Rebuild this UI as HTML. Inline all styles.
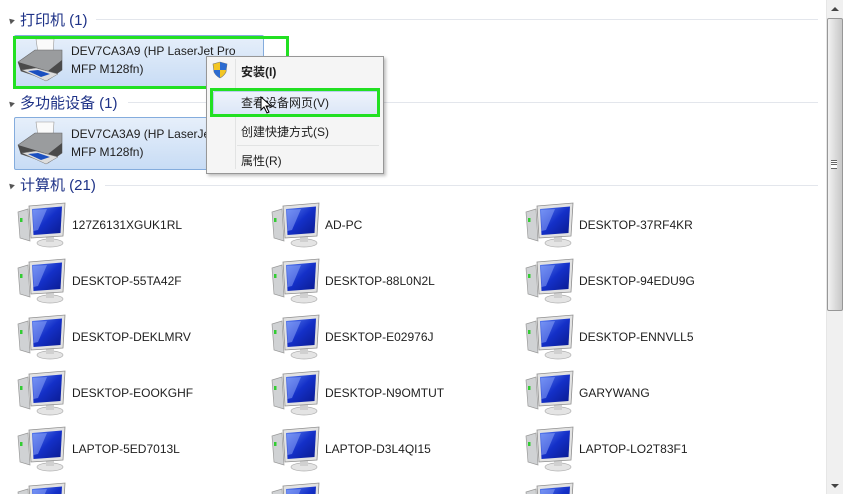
<!DOCTYPE html>
<html><head><meta charset="utf-8"><style>
html,body{margin:0;width:843px;height:494px;overflow:hidden}
body{background:#fff;position:relative;font-family:"Liberation Sans","Noto Sans CJK SC",sans-serif;font-size:12px;color:#1e1e1e}
.a{position:absolute}
.hd{position:absolute;left:8px;font-size:15px;color:#1e3287;white-space:nowrap}
.hd i{display:inline-block;width:0;height:0;border-left:3px solid transparent;border-right:3px solid transparent;border-bottom:5px solid #555;transform:rotate(-45deg);margin-right:6px;vertical-align:2px}
.ln{position:absolute;height:1px;background:#e3e6ec;right:25px}
.tile{position:absolute;background:linear-gradient(#e6effa,#c8dcf5);border:1px solid #84acdd;border-radius:2px}
.t{position:absolute;white-space:nowrap;font-size:12px}
.g{position:absolute;border:3px solid #22e022}
.mi{position:absolute;left:241px;white-space:nowrap}
</style></head><body>
<svg width="0" height="0" style="position:absolute"><defs>
<linearGradient id="sc" x1="0" y1="0" x2="1" y2="1"><stop offset="0" stop-color="#5a7ff0"/><stop offset=".5" stop-color="#1430c8"/><stop offset="1" stop-color="#0a1a90"/></linearGradient>
<g id="pc"><path d="M4 12 L14 9 L16 41 L6 38Z" fill="#d0d2d4" stroke="#9a9a9a" stroke-width=".7"/><rect x="6" y="18" width="2.5" height="4" fill="#3c3"/>
<ellipse cx="36" cy="43" rx="13" ry="4" fill="#e4e4e4" stroke="#b0b0b0" stroke-width=".7"/><rect x="32" y="36" width="8" height="6" fill="#d0d0d0"/>
<path d="M15 6 L51 3 L49 36 L17 38Z" fill="#e2e2e2" stroke="#8f8f8f" stroke-width=".8"/><path d="M18 9 L48 6.5 L46.5 33 L19.5 35Z" fill="url(#sc)"/><path d="M19 10 L33 9 L24 30 L19.5 31Z" fill="#9fb5ff" opacity=".45"/></g>
<g id="pr"><path d="M20 1 L38 1 L37 15 L22 15Z" fill="#fafafa" stroke="#999" stroke-width=".6"/><path d="M2 24 L19 12 L46 12 L46 32 L32 42 L5 33Z" fill="#9a9c9e" stroke="#666" stroke-width=".6"/><path d="M2 24 L32 33 L46 22 L46 32 L32 42 L5 33Z" fill="#4a4a4a"/><path d="M6 32 L20 30 L42 36 L30 43Z" fill="#ddd" stroke="#777" stroke-width=".5"/><path d="M12 33 L22 32 L34 36 L25 39Z" fill="#1a4fc0"/></g>
</defs></svg>

<div class="hd" style="top:9px"><i></i>打印机 (1)</div><div class="ln" style="left:96px;top:19px"></div>
<div class="hd" style="top:92px"><i></i>多功能设备 (1)</div><div class="ln" style="left:128px;top:102px"></div>
<div class="hd" style="top:174px"><i></i>计算机 (21)</div><div class="ln" style="left:105px;top:185px"></div>

<div class="tile" style="left:14px;top:35px;width:248px;height:51px"></div>
<svg class="a" style="left:16px;top:38px" width="48" height="46"><use href="#pr"/></svg>
<div class="t" style="left:71px;top:42px;line-height:18px">DEV7CA3A9 (HP LaserJet Pro<br>MFP M128fn)</div>
<div class="g" style="left:13px;top:36px;width:270px;height:47px"></div>

<div class="tile" style="left:14px;top:117px;width:248px;height:51px"></div>
<svg class="a" style="left:16px;top:121px" width="48" height="46"><use href="#pr"/></svg>
<div class="t" style="left:71px;top:125px;line-height:18px">DEV7CA3A9 (HP LaserJet Pro<br>MFP M128fn)</div>

<div class="a" style="left:206px;top:56px;width:176px;height:116px;background:#f5f5f5;border:1px solid #979797;box-shadow:2px 2px 3px rgba(0,0,0,.25)"></div>
<div class="a" style="left:235px;top:59px;width:1px;height:110px;background:#e2e3e3"></div>
<div class="a" style="left:237px;top:145px;width:142px;height:1px;background:#e2e3e3"></div>
<div class="a" style="left:213px;top:91px;width:164px;height:22px;background:linear-gradient(#eef3fb,#dce7f7);border:1px solid #b8d0ef;border-radius:2px"></div>
<svg class="a" style="left:212px;top:61px" width="16" height="18"><path d="M8 1 L15 3 L14 11 Q12 15 8 17 Q4 15 2 11 L1 3Z" fill="#f3c623" stroke="#777" stroke-width=".6"/><path d="M8 1 L15 3 L14 9 L8 9Z" fill="#2c6bd0"/><path d="M8 9 L2 9 L2 11 Q4 15 8 17Z" fill="#2c6bd0"/></svg>
<div class="mi" style="top:63px;font-weight:bold">安装(I)</div>
<div class="mi" style="top:94px">查看设备网页(V)</div>
<div class="mi" style="top:123px">创建快捷方式(S)</div>
<div class="mi" style="top:152px">属性(R)</div>
<div class="g" style="left:210px;top:88px;width:164px;height:23px"></div>
<svg class="a" style="left:260px;top:96px" width="14" height="18"><path d="M1 1 L1 14 L4 11 L7 17 L9 16 L6 10 L11 10Z" fill="#fff" stroke="#000" stroke-width="1"/></svg>

<svg class="a" style="left:14px;top:200px" width="54" height="50"><use href="#pc"/></svg><div class="t" style="left:72px;top:218px">127Z6131XGUK1RL</div>
<svg class="a" style="left:268px;top:200px" width="54" height="50"><use href="#pc"/></svg><div class="t" style="left:325px;top:218px">AD-PC</div>
<svg class="a" style="left:522px;top:200px" width="54" height="50"><use href="#pc"/></svg><div class="t" style="left:579px;top:218px">DESKTOP-37RF4KR</div>

<svg class="a" style="left:14px;top:256px" width="54" height="50"><use href="#pc"/></svg><div class="t" style="left:72px;top:274px">DESKTOP-55TA42F</div>
<svg class="a" style="left:268px;top:256px" width="54" height="50"><use href="#pc"/></svg><div class="t" style="left:325px;top:274px">DESKTOP-88L0N2L</div>
<svg class="a" style="left:522px;top:256px" width="54" height="50"><use href="#pc"/></svg><div class="t" style="left:579px;top:274px">DESKTOP-94EDU9G</div>

<svg class="a" style="left:14px;top:312px" width="54" height="50"><use href="#pc"/></svg><div class="t" style="left:72px;top:330px">DESKTOP-DEKLMRV</div>
<svg class="a" style="left:268px;top:312px" width="54" height="50"><use href="#pc"/></svg><div class="t" style="left:325px;top:330px">DESKTOP-E02976J</div>
<svg class="a" style="left:522px;top:312px" width="54" height="50"><use href="#pc"/></svg><div class="t" style="left:579px;top:330px">DESKTOP-ENNVLL5</div>

<svg class="a" style="left:14px;top:368px" width="54" height="50"><use href="#pc"/></svg><div class="t" style="left:72px;top:386px">DESKTOP-EOOKGHF</div>
<svg class="a" style="left:268px;top:368px" width="54" height="50"><use href="#pc"/></svg><div class="t" style="left:325px;top:386px">DESKTOP-N9OMTUT</div>
<svg class="a" style="left:522px;top:368px" width="54" height="50"><use href="#pc"/></svg><div class="t" style="left:579px;top:386px">GARYWANG</div>

<svg class="a" style="left:14px;top:424px" width="54" height="50"><use href="#pc"/></svg><div class="t" style="left:72px;top:442px">LAPTOP-5ED7013L</div>
<svg class="a" style="left:268px;top:424px" width="54" height="50"><use href="#pc"/></svg><div class="t" style="left:325px;top:442px">LAPTOP-D3L4QI15</div>
<svg class="a" style="left:522px;top:424px" width="54" height="50"><use href="#pc"/></svg><div class="t" style="left:579px;top:442px">LAPTOP-LO2T83F1</div>

<svg class="a" style="left:14px;top:480px" width="54" height="14"><use href="#pc"/></svg>
<svg class="a" style="left:268px;top:480px" width="54" height="14"><use href="#pc"/></svg>
<svg class="a" style="left:522px;top:480px" width="54" height="14"><use href="#pc"/></svg>

<div class="a" style="left:826px;top:0;width:17px;height:494px;background:#f0f0f0;border-left:1px solid #e6e6e6"></div>
<div class="a" style="left:831px;top:7px;border-left:4px solid transparent;border-right:4px solid transparent;border-bottom:4px solid #444"></div>
<div class="a" style="left:831px;top:484px;border-left:4px solid transparent;border-right:4px solid transparent;border-top:4px solid #444"></div>
<div class="a" style="left:827px;top:18px;width:14px;height:291px;background:linear-gradient(90deg,#f2f2f2,#dcdcdc 50%,#c8c8c8);border:1px solid #979797;border-radius:2px"></div>
<div class="a" style="left:831px;top:160px;width:6px;height:7px;border-top:1px solid #666;border-bottom:1px solid #666;background:linear-gradient(#fff 0 1px,#666 1px 2px,#fff 2px 3px,#666 3px 4px,#fff 4px)"></div>
</body></html>
